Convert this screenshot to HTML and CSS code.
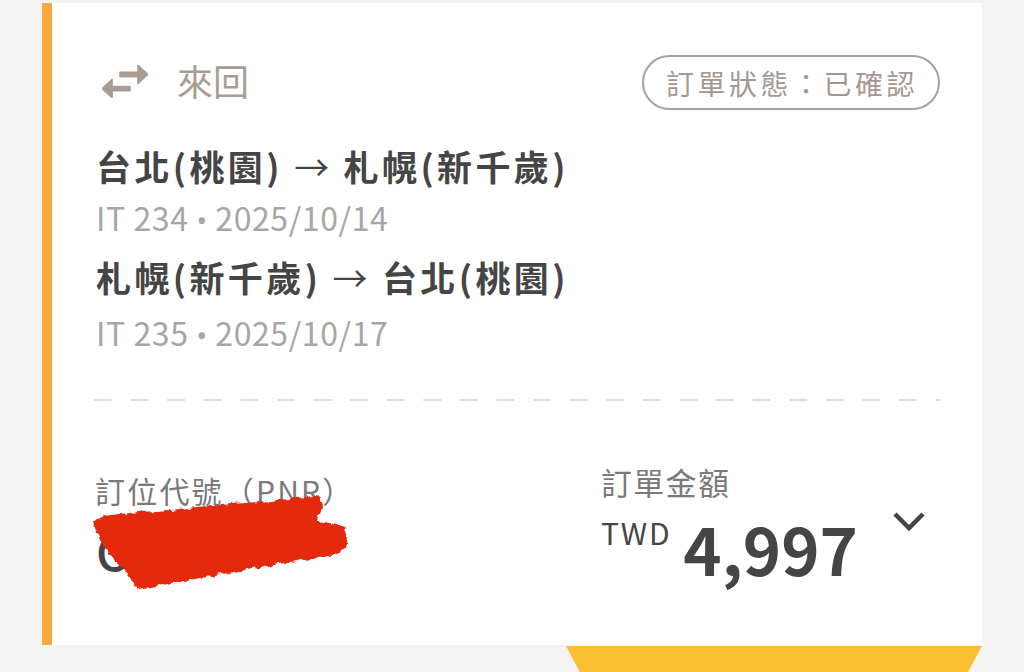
FILE: index.html
```html
<!DOCTYPE html>
<html lang="zh-Hant">
<head>
<meta charset="utf-8">
<link rel="stylesheet" href="styles.css">
</head>
<body>
<div class="page">
  <div class="card">
    <div class="header">
      <div class="trip-type">
        <svg class="swap-icon" viewBox="3 5 18 14" preserveAspectRatio="none" aria-hidden="true">
          <path d="M6.99 11L3 15l3.99 4v-3H14v-2H6.99v-3zM21 9l-3.99-4v3H10v2h7.01v3L21 9z" fill="#a89c95" stroke="#a89c95" stroke-width="0.5" stroke-linejoin="round"/>
        </svg>
        <span class="trip-label">來回</span>
      </div>
      <div class="badge">訂單狀態：已確認</div>
    </div>

    <div class="routes">
      <div class="route">台北(桃園) <span class="arrow">→</span> 札幌(新千歲)</div>
      <div class="flight">IT 234 <span class="dot">•</span> 2025/10/14</div>
      <div class="route route-2">札幌(新千歲) <span class="arrow">→</span> 台北(桃園)</div>
      <div class="flight flight-2">IT 235 <span class="dot">•</span> 2025/10/17</div>
    </div>

    <div class="divider"></div>

    <div class="summary">
      <div class="pnr">
        <div class="pnr-label">訂位代號（PNR）</div>
        <div class="pnr-value">C</div>
        <svg class="redact" viewBox="84 487 274 116" aria-hidden="true">
          <defs>
            <filter id="brush" x="-10%" y="-20%" width="120%" height="140%">
              <feTurbulence type="fractalNoise" baseFrequency="0.12" numOctaves="2" seed="3" result="noise"/>
              <feDisplacementMap in="SourceGraphic" in2="noise" scale="7" xChannelSelector="R" yChannelSelector="G"/>
            </filter>
          </defs>
          <g filter="url(#brush)" fill="#e32b0c">
            <path d="M94 522 L104 517 L120 515 L140 513 L170 511 L196 508 L220 506 L246 504 L270 502 L296 499 L316 497 L322 503 L320 512 L317 522 L330 524 L344 529 L347 538 L345 549 L336 556 L312 560 L290 563 L264 568 L240 572 L216 576 L195 580 L172 584 L150 589 L138 591 L131 580 L124 571 L116 562 L108 553 L101 543 L96 534 Z"/>
          </g>
        </svg>
      </div>
      <div class="amount">
        <div class="amount-label">訂單金額</div>
        <div class="amount-row">
          <span class="currency">TWD</span>
          <span class="total">4,997</span>
        </div>
      </div>
      <svg class="chevron" viewBox="0 0 34 22" aria-hidden="true">
        <path d="M3 3 L17 17 L31 3" fill="none" stroke="#454545" stroke-width="4.5"/>
      </svg>
    </div>
  </div>
  <div class="tab"></div>
</div>
</body>
</html>
```

FILE: styles.css
```css
* {
  box-sizing: border-box;
}

html, body {
  margin: 0;
  padding: 0;
  background: #f3f3f3;
}

body {
  font-family: "Noto Sans CJK TC", "Noto Sans", sans-serif;
  width: 1024px;
  height: 672px;
  overflow: hidden;
}

.page {
  padding: 3px 42px 0 42px;
}

.card {
  background: #ffffff;
  border-left: 10px solid #f9a93a;
  height: 642px;
  padding: 52px 42px 0 44px;
  display: flex;
  flex-direction: column;
}

.header {
  display: flex;
  align-items: center;
  justify-content: space-between;
  height: 55px;
}

.trip-type {
  display: flex;
  align-items: center;
  gap: 29px;
  padding-left: 6px;
  margin-bottom: 6px;
}

.swap-icon {
  width: 46px;
  height: 33px;
  display: block;
  margin-top: 4px;
}

.trip-label {
  font-size: 36px;
  line-height: 40px;
  color: #a89c95;
}

.badge {
  height: 55px;
  border: 2px solid #aba19b;
  border-radius: 28px;
  padding: 0 20px 0 22px;
  display: flex;
  align-items: center;
  font-size: 28px;
  letter-spacing: 3.5px;
  color: #a39892;
}

.routes {
  margin-top: 31px;
  display: flex;
  flex-direction: column;
}

.route {
  font-size: 35px;
  font-weight: 700;
  line-height: 50px;
  height: 50px;
  color: #454545;
  letter-spacing: 3.4px;
  white-space: nowrap;
}

.arrow {
  font-weight: 400;
  letter-spacing: 0;
  margin-right: 3px;
}

.route-2 {
  margin-top: 15px;
}

.flight {
  margin-top: 6px;
  font-size: 32px;
  line-height: 40px;
  height: 40px;
  color: #a6a6a6;
  letter-spacing: 0.6px;
}

.flight-2 {
  margin-top: 10px;
}

.dot {
  font-family: "Noto Sans", sans-serif;
  font-size: 28px;
}

.divider {
  margin-top: 47px;
  height: 2px;
  margin-left: -2px;
  background-image: linear-gradient(to right, #dcdcdc 0 18px, transparent 18px 36.6px);
  background-size: 36.6px 2px;
  background-repeat: repeat-x;
}

.summary {
  margin-top: 61px;
  display: flex;
  align-items: flex-start;
}

.pnr {
  position: relative;
  flex: 0 0 507px;
  padding-top: 8px;
}

.pnr-label {
  font-size: 30px;
  line-height: 40px;
  letter-spacing: 2.2px;
  color: #7a7a7a;
  margin-left: -1px;
}

.pnr-value {
  margin-top: 12px;
  font-size: 48px;
  line-height: 56px;
  font-weight: 500;
  color: #454545;
}

.redact {
  position: absolute;
  left: -12px;
  top: 24px;
  width: 274px;
  height: 116px;
}

.amount {
  flex: 1;
}

.amount-label {
  font-size: 31px;
  line-height: 40px;
  letter-spacing: 1.3px;
  color: #7a7a7a;
  margin-left: -2px;
}

.amount-row {
  display: flex;
  align-items: flex-start;
  gap: 12px;
  margin-top: 6px;
  margin-left: -2px;
}

.currency {
  font-size: 30px;
  line-height: 48px;
  color: #454545;
  letter-spacing: 1.8px;
}

.total {
  font-size: 65px;
  line-height: 80px;
  font-weight: 700;
  color: #454545;
}

.chevron {
  width: 34px;
  height: 22px;
  margin-top: 49px;
  margin-right: 14px;
  display: block;
}

.tab {
  margin: 1px 0 0 524px;
  height: 30px;
  background: #fcbf32;
  clip-path: polygon(0 0, 100% 0, calc(100% - 16px) 100%, 16px 100%);
}
```
